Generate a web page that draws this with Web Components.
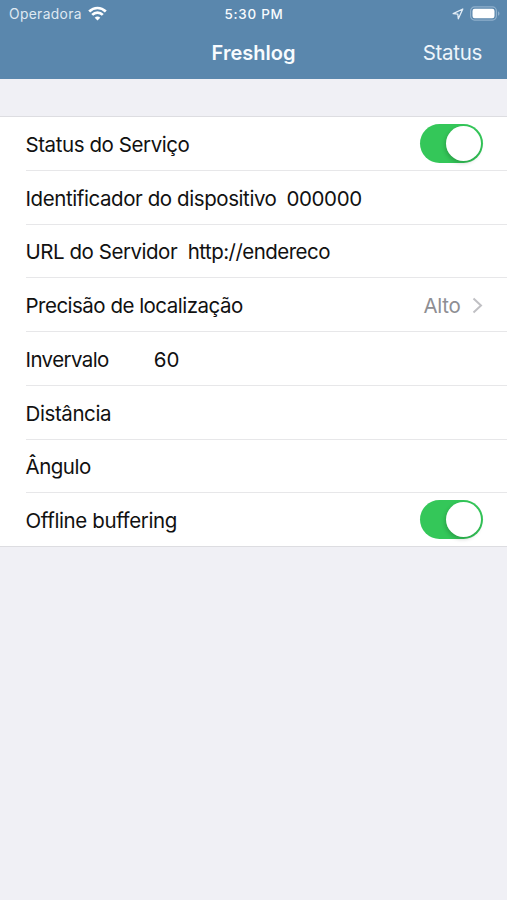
<!DOCTYPE html>
<html lang="pt"><head><meta charset="utf-8"><title>Freshlog</title>
<style>html,body{margin:0;height:100%;background:#f0f0f5}body{font-family:Inter,"Liberation Sans",sans-serif}</style></head>
<body><settings-screen></settings-screen>
<script>
const define=(name,html)=>customElements.define(name,class extends HTMLElement{
  constructor(){super();this.attachShadow({mode:'open'}).innerHTML=html;}
});
define('status-bar',`<style>
:host{display:grid;grid-template-columns:1fr auto 1fr;align-items:center;height:27px;padding:0 7px 0 9px;box-sizing:border-box;color:#fff;font-size:13.8px}
.l{display:flex;align-items:center;gap:6px}.c{color:#dfe9f2;letter-spacing:.35px}.t{font-weight:500;font-size:13.4px;letter-spacing:.75px;color:#f8fbfe;margin-left:-1px}
.r{display:flex;justify-content:flex-end;align-items:center;gap:6px}svg{display:block}.w{margin-top:-1px}</style>
<div class="l"><span class="c">Operadora</span><svg class="w" width="19" height="15" viewBox="0 0 19 15" fill="none" stroke="#fff" stroke-width="2.700"><path d="M1.200 5.500C6 .8 13 .8 17.800 5.500"/><path d="M4.200 8.900c3-3 7.600-3 10.600 0"/><path d="M9.500 14.600 6.700 11.700c1.600-1.500 4-1.500 5.600 0z" fill="#fff" stroke="none"/></svg></div>
<span class="t">5:30 PM</span>
<div class="r"><svg width="12" height="12" viewBox="0 0 12 12" fill="none" stroke="#e3edf6" stroke-width="1.300" stroke-linejoin="round"><path d="M10.800 1 1.200 5.600l4.600.5.500 4.700z"/></svg>
<svg width="30" height="15" viewBox="0 0 30 15"><rect x=".6" y=".9" width="25.800" height="13.200" rx="4" fill="none" stroke="#8fb0cc" stroke-width="1.200"/><rect x="2.500" y="2.800" width="22" height="9.400" rx="2.200" fill="#fff"/><path d="M28 5.200c2 .9 2 3.700 0 4.600z" fill="#8fb0cc"/></svg></div>`);
define('nav-bar',`<style>
:host{display:grid;grid-template-columns:1fr auto 1fr;align-items:center;height:51px;padding:0 25px;box-sizing:border-box;color:#fff;font-size:20.5px}
.t{grid-column:2;font-weight:600;font-size:20px;color:#f8fbfe}.a{justify-self:end;color:#eef5fb;letter-spacing:-.3px}</style>
<span class="t"><slot></slot></span><span class="a"><slot name="action"></slot></span>`);
define('toggle-switch',`<style>
:host{display:flex;justify-content:flex-end;width:63px;height:39px;box-sizing:border-box;padding:2px;border-radius:20px;background:#34c759}
i{width:35px;height:35px;border-radius:50%;background:#fff;box-shadow:-1px 2px 4px #0003}</style><i></i>`);
define('settings-row',`<style>
:host{display:flex;padding-left:26px;height:53.750px;box-sizing:border-box;font-size:20.5px;color:#111;white-space:nowrap}
.b{display:flex;flex:1;align-items:center;padding:2px 24px 0 0;border-bottom:1px solid #e7e7e9}
.n{margin-left:-.5px;letter-spacing:var(--track,-.42px)}
:host(:last-of-type){height:53px}:host(:last-of-type) .b{border-color:transparent}.e{margin-left:auto}</style>
<div class="b"><span class="n"><slot></slot></span><slot name="value"></slot><div class="e"><slot name="end"></slot></div></div>`);
define('chevron-icon',`<style>:host{display:block}svg{display:block}</style><svg width="11" height="17" viewBox="0 0 11 17" fill="none" stroke="#c0c0c4" stroke-width="2"><path d="m1.500 1.500 7.500 7-7.500 7"/></svg>`);
define('settings-screen',`<style>
:host{display:block}header{background:#5a87ad;height:79px}
main{margin-top:37px;border-block:1px solid #dddde1;background:#fff}
.d{display:flex;align-items:center;gap:11.500px;color:#8e8e93;letter-spacing:-.3px}
.id{margin-left:10px;letter-spacing:-.4px}.url{margin-left:10.5px;letter-spacing:-.53px}.num{margin-left:45px}
toggle-switch{margin-top:-2px}
</style><header><status-bar></status-bar><nav-bar>Freshlog<span slot="action">Status</span></nav-bar></header>
<main>
<settings-row>Status do Serviço<toggle-switch slot="end"></toggle-switch></settings-row>
<settings-row style="--track:-.42px">Identificador do dispositivo<span slot="value" class="id">000000</span></settings-row>
<settings-row style="--track:-.46px">URL do Servidor<span slot="value" class="url">http://endereco</span></settings-row>
<settings-row style="--track:-.51px">Precisão de localização<div slot="end" class="d"><span>Alto</span><chevron-icon></chevron-icon></div></settings-row>
<settings-row style="--track:-.6px">Invervalo<span slot="value" class="num">60</span></settings-row>
<settings-row style="--track:-.4px">Distância</settings-row>
<settings-row style="--track:-.5px">Ângulo</settings-row>
<settings-row style="--track:-.38px">Offline buffering<toggle-switch slot="end"></toggle-switch></settings-row>
</main>`);
</script></body></html>
